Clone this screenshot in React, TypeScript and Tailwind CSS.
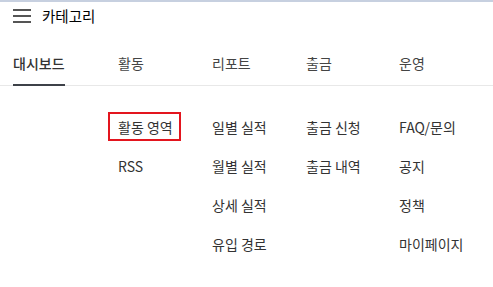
import { useState } from 'react'

const tabs = [
  { name: '대시보드', items: [] as string[] },
  { name: '활동', items: ['활동 영역', 'RSS'] },
  { name: '리포트', items: ['일별 실적', '월별 실적', '상세 실적', '유입 경로'] },
  { name: '출금', items: ['출금 신청', '출금 내역'] },
  { name: '운영', items: ['FAQ/문의', '공지', '정책', '마이페이지'] },
]
const colW = ['w-[105px]', 'w-[94px]', 'w-[94px]', 'w-[93px]', 'w-[94px]']

export default function App() {
  const [active] = useState(0)
  return (
    <div className="w-[493px] h-[287px] bg-white border-t-2 border-[#c7d0e0] text-[#333] font-['Noto_Sans_CJK_KR','Noto_Sans',sans-serif] overflow-hidden">
      {/* 상단 헤더 */}
      <div className="flex items-center h-[27px] pl-[13px]">
        <div className="flex flex-col gap-[4px] w-[18px]">
          <span className="block h-[2px] bg-[#555]" />
          <span className="block h-[2px] bg-[#555]" />
          <span className="block h-[2px] bg-[#555]" />
        </div>
        <span className="ml-[11px] text-[14.5px] leading-[20px] text-black">카테고리</span>
      </div>

      {/* 탭 */}
      <div className="flex pl-[13px] border-b border-[#e8e8e8]">
        {tabs.map((t, i) => (
          <div key={t.name} className={colW[i]}>
            <div className={`inline-block pt-[24px] pb-[11px] text-[14px] leading-[20px] -mb-px border-b-2 ${active === i ? 'border-[#3d4148] font-medium text-[#333]' : 'border-transparent text-[#444]'}`}>{t.name}</div>
          </div>
        ))}
      </div>

      {/* 하위 메뉴 */}
      <div className="flex pl-[13px] pt-[21px]">
        {tabs.map((t, i) => (
          <div key={t.name} className={`${colW[i]} flex flex-col`}>
            {t.items.map((it, j) => (
              <div key={it} className="h-[39px] flex items-center text-[14px] leading-[20px] text-[#333]">
                <span className="relative">
                  {it}
                  {i === 1 && j === 0 && <span className="absolute -left-[10px] -right-[8px] -top-[5px] -bottom-[4px] border-2 border-[#e3151e]" />}
                </span>
              </div>
            ))}
          </div>
        ))}
      </div>
    </div>
  )
}
